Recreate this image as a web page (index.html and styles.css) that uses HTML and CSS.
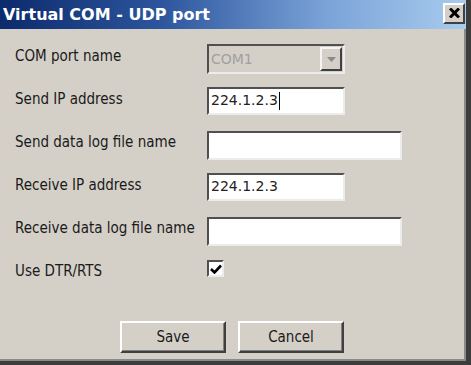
FILE: index.html
```html
<!DOCTYPE html>
<html lang="en">
<head>
    <meta charset="UTF-8">
    <title>Virtual COM - UDP port</title>
    <link rel="stylesheet" href="styles.css">
</head>
<body>
    <div class="window">
        <div class="titlebar">
            <span class="title">Virtual COM - UDP port</span>
            <button class="close-btn" aria-label="Close">
                <svg width="11" height="10" viewBox="0 0 11 10">
                    <path d="M1 0.5 L10 9.5 M10 0.5 L1 9.5" stroke="#000" stroke-width="3"/>
                </svg>
            </button>
        </div>

        <div class="form">
            <div class="row">
                <label>COM port name</label>
                <div class="combo">
                    <span class="combo-text">COM1</span>
                    <span class="combo-btn">
                        <svg width="9" height="5" viewBox="0 0 9 5"><path d="M0 0 H9 L4.5 5 Z" fill="#8a8a8a"/></svg>
                    </span>
                </div>
            </div>
            <div class="row">
                <label>Send IP address</label>
                <div class="textbox short">224.1.2.3<span class="caret"></span></div>
            </div>
            <div class="row">
                <label>Send data log file name</label>
                <div class="textbox long"></div>
            </div>
            <div class="row">
                <label>Receive IP address</label>
                <div class="textbox short">224.1.2.3</div>
            </div>
            <div class="row">
                <label>Receive data log file name</label>
                <div class="textbox long"></div>
            </div>
            <div class="row">
                <label>Use DTR/RTS</label>
                <div class="checkbox">
                    <svg width="12" height="10" viewBox="0 0 12 10"><path d="M1 5 L4.5 8.5 L11 1.5" fill="none" stroke="#000" stroke-width="2.6"/></svg>
                </div>
            </div>
        </div>

        <div class="buttons">
            <button class="btn">Save</button>
            <button class="btn">Cancel</button>
        </div>
    </div>
</body>
</html>
```

FILE: styles.css
```css
html, body {
    margin: 0;
    padding: 0;
    background: #d4d0c8;
}
.window {
    box-sizing: border-box;
    width: 471px;
    height: 365px;
    background: #d4d0c8;
    border-right: 5px solid #3c3c3c;
    border-bottom: 4px solid #3c3c3c;
    box-shadow: inset -2px -2px 0 #8a8a8a;
    font-family: "DejaVu Sans Condensed", "DejaVu Sans", sans-serif;
    font-size: 15px;
    color: #000;
    display: flex;
    flex-direction: column;
}
.titlebar {
    height: 29px;
    background: linear-gradient(90deg, #0c2a6c 0%, #2d569e 35%, #7ba3d8 70%, #a8cbee 100%);
    display: flex;
    align-items: center;
    justify-content: space-between;
    padding: 0 1px 0 3px;
}
.title {
    color: #fff;
    font-family: "DejaVu Sans", sans-serif;
    font-weight: bold;
    font-size: 16px;
}
.close-btn {
    box-sizing: border-box;
    width: 22px;
    height: 21px;
    margin-top: -3px;
    padding: 0;
    background: #d4d0c8;
    border: 2px solid;
    border-color: #ffffff #404040 #404040 #ffffff;
    display: flex;
    align-items: center;
    justify-content: center;
}
.form {
    padding: 15px 0 0 15px;
}
.row {
    display: flex;
    height: 43px;
    align-items: flex-start;
}
.row label {
    width: 192px;
    padding-top: 3px;
    color: #1a1a1a;
}
.textbox {
    box-sizing: border-box;
    height: 28px;
    background: #fff;
    border: 2px solid;
    border-color: #505050 #ececec #ececec #505050;
    padding: 3px 2px 0;
    font-family: "DejaVu Sans", sans-serif;
    font-size: 14px;
    color: #222;
    display: flex;
    align-items: flex-start;
}
.textbox.short {
    width: 138px;
}
.textbox.long {
    width: 195px;
    height: 29px;
    margin-top: 1px;
}
.caret {
    display: inline-block;
    width: 1px;
    height: 18px;
    margin-left: 1px;
    background: #000;
}
.combo {
    box-sizing: border-box;
    width: 138px;
    height: 30px;
    background: #d4d0c8;
    border: 2px solid;
    border-color: #505050 #ececec #ececec #505050;
    display: flex;
    align-items: center;
    justify-content: space-between;
    padding: 0 1px 0 2px;
    font-family: "DejaVu Sans", sans-serif;
}
.combo-text {
    color: #a0a0a0;
    font-size: 14px;
}
.combo-btn {
    box-sizing: border-box;
    width: 22px;
    height: 24px;
    border: 2px solid;
    border-color: #f4f4f4 #404040 #404040 #f4f4f4;
    background: #d4d0c8;
    display: flex;
    align-items: center;
    justify-content: center;
}
.checkbox {
    box-sizing: border-box;
    width: 17px;
    height: 17px;
    margin-top: 1px;
    background: #fff;
    border: 2px solid;
    border-color: #505050 #ececec #ececec #505050;
    display: flex;
    align-items: center;
    justify-content: center;
}
.buttons {
    display: flex;
    justify-content: center;
    gap: 12px;
    margin-top: 19px;
    padding-right: 2px;
}
.btn {
    box-sizing: border-box;
    width: 106px;
    height: 32px;
    background: #d4d0c8;
    border: 2px solid;
    border-color: #ffffff #404040 #404040 #ffffff;
    box-shadow: inset -1px -1px 0 #808080;
    font-family: "DejaVu Sans Condensed", "DejaVu Sans", sans-serif;
    font-size: 15px;
    color: #1a1a1a;
    padding: 0;
}
```
